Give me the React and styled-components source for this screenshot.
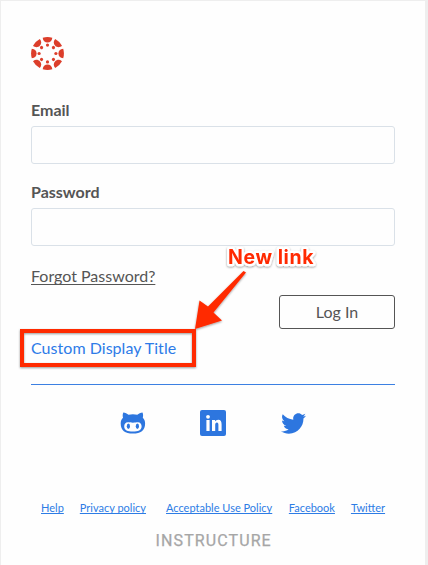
import React from "react";
import styled, { createGlobalStyle } from "styled-components";
import { FaTwitter } from "react-icons/fa";

const GlobalStyle = createGlobalStyle`
  *, *::before, *::after { box-sizing: border-box; }
  body { margin: 0; background: #eeeeee; font-family: Lato, sans-serif; }
`;

const Page = styled.div`
  position: relative;
  width: 428px;
  height: 565px;
  padding: 1px 3px 0 1px;
  background: #eeeeee;
  overflow: hidden;
`;

const Card = styled.main`
  display: flex;
  flex-direction: column;
  height: 564px;
  padding: 36px 30px 0;
  background: #fefefe;
`;

const Logo = styled.svg`
  display: block;
  width: 33px;
  height: 33px;
  margin-bottom: 30px;
  fill: #dc3e2b;
`;

const Field = styled.label`
  display: flex;
  flex-direction: column;
  gap: 6px;
  margin-bottom: 18px;
`;

const FieldLabel = styled.span`
  height: 20px;
  font-size: 16px;
  line-height: 20px;
  font-weight: 700;
  color: #555555;
`;

const Input = styled.input`
  width: 364px;
  height: 38px;
  padding: 0 12px;
  border: 1px solid #dae1e8;
  border-radius: 3px;
  background: #fefefe;
  outline: none;
`;

const Actions = styled.div`
  display: flex;
  justify-content: space-between;
  height: 65px;
`;

const ForgotLink = styled.a`
  margin-top: 2px;
  font-size: 16px;
  line-height: 20px;
  color: #555555;
  text-decoration: underline;
  text-underline-offset: 2px;
  text-decoration-thickness: 1px;
  text-decoration-skip-ink: none;
`;

const LoginButton = styled.button`
  align-self: flex-end;
  width: 116px;
  height: 34px;
  padding: 0;
  border: 1px solid #555555;
  border-radius: 3px;
  background: #fefefe;
  color: #555555;
  font: 16px/32px Lato, sans-serif;
`;

const CustomLink = styled.a`
  margin-top: 9px;
  font-size: 16px;
  line-height: 20px;
  letter-spacing: 0.04px;
  color: #2d7be8;
`;

const Divider = styled.hr`
  width: 364px;
  height: 1px;
  margin: 26px 0 0;
  border: 0;
  background: #3c80e2;
`;

const Social = styled.nav`
  display: flex;
  align-items: center;
  justify-content: center;
  height: 30px;
  margin-top: 23px;
  color: #2d76df;
`;

const SocialLink = styled.a`
  display: flex;
  justify-content: center;
  width: 80.5px;
`;

const FooterLinks = styled.nav`
  display: flex;
  margin: 62px 0 0 10px;
  white-space: nowrap;
`;

const FooterLink = styled.a`
  margin-right: ${({ $gap }) => $gap}px;
  font-size: 11px;
  line-height: 16px;
  color: #2d7ce5;
  text-decoration: underline;
  text-decoration-skip-ink: none;
  text-underline-offset: 1px;
  text-decoration-thickness: 1px;
`;

const Brand = styled.div`
  margin: 15px 0 0 124.6px;
  font: 400 16px/20px Roboto, sans-serif;
  letter-spacing: 1.1px;
  color: #a6a6a6;
  -webkit-text-stroke: 0.25px #a6a6a6;
`;

const Annotation = styled.svg`
  position: absolute;
  inset: 0;
  pointer-events: none;
`;

const Callout = styled.text`
  font: 700 19.5px Inter, sans-serif;
  fill: #ff2a05;
  stroke: #fff;
  stroke-width: 4.5px;
  stroke-linejoin: round;
  paint-order: stroke;
`;

const ANGLES = [0, 45, 90, 135, 180, 225, 270, 315];

const LINKS = [
  { label: "Help", gap: 16 },
  { label: "Privacy policy", gap: 20 },
  { label: "Acceptable Use Policy", gap: 16.6 },
  { label: "Facebook", gap: 16 },
  { label: "Twitter", gap: 0 },
];

function CanvasLogo() {
  return (
    <Logo viewBox="-16.5 -16.5 33 33" aria-label="Canvas">
      {ANGLES.map((angle) => (
        <g key={angle} transform={`rotate(${angle})`}>
          <path d="M-4.8-15.7A16.4 16.4 0 0 1 4.8-15.7C4.6-12.6 2.6-10.9 0-10.9S-4.6-12.6-4.8-15.7Z" />
          <circle cy="-8.4" r="1.6" />
        </g>
      ))}
    </Logo>
  );
}

function OctocatIcon() {
  return (
    <svg width="26" height="22" viewBox="0 0 26 22" fill="currentColor" aria-label="GitHub">
      <path
        fillRule="evenodd"
        d="M3.3.6C5.2.7 7.1 1.7 8.5 2.8Q12.9 1.9 17.3 2.8C18.7 1.7 20.6.7 22.5.6C23.2 2.3 23.3 4.1 22.8 5.7C24.4 7.2 25.1 9 25.1 11.4C25.1 18.3 20.7 21.6 12.9 21.6S.7 18.3.7 11.4C.7 9 1.4 7.2 3 5.7C2.5 4.1 2.6 2.3 3.3.6ZM7.8 10.3C5.6 10.3 4.2 12 4.2 14.3C4.2 18.4 7.6 19.5 12.9 19.5S21.6 18.4 21.6 14.3C21.6 12 20.2 10.3 18 10.3C16.1 10.3 14.8 10.7 12.9 10.7S9.7 10.3 7.8 10.3Z"
      />
      <ellipse cx="8.4" cy="14.3" rx="1.6" ry="2.7" />
      <ellipse cx="17.4" cy="14.3" rx="1.6" ry="2.7" />
    </svg>
  );
}

function LinkedInIcon() {
  return (
    <svg width="26" height="26" viewBox="0 0 26 26" aria-label="LinkedIn">
      <rect width="26" height="26" rx="2" fill="currentColor" />
      <g fill="#fefefe">
        <circle cx="8" cy="6.8" r="1.9" />
        <path d="M6.4 10H9.6V21H6.4ZM12 10H15V11.6C15.7 10.4 16.8 9.7 18.2 9.7C20.8 9.7 21.6 11.5 21.6 14.3V21H18.4V15C18.4 13.5 18.1 12.5 16.9 12.5C15.7 12.5 15.2 13.5 15.2 15V21H12Z" />
      </g>
    </svg>
  );
}

export default function App() {
  return (
    <>
      <GlobalStyle />
      <Page>
        <Card>
          <CanvasLogo />
          <Field>
            <FieldLabel>Email</FieldLabel>
            <Input type="email" />
          </Field>
          <Field>
            <FieldLabel>Password</FieldLabel>
            <Input type="password" />
          </Field>
          <Actions>
            <ForgotLink>Forgot Password?</ForgotLink>
            <LoginButton>Log In</LoginButton>
          </Actions>
          <CustomLink>Custom Display Title</CustomLink>
          <Divider />
          <Social>
            <SocialLink><OctocatIcon /></SocialLink>
            <SocialLink><LinkedInIcon /></SocialLink>
            <SocialLink><FaTwitter size={25} /></SocialLink>
          </Social>
          <FooterLinks>
            {LINKS.map(({ label, gap }) => (
              <FooterLink key={label} $gap={gap}>{label}</FooterLink>
            ))}
          </FooterLinks>
          <Brand>INSTRUCTURE</Brand>
        </Card>
        <Annotation width="428" height="565" viewBox="0 0 428 565">
          <defs>
            <filter id="shadow" x="-10%" y="-20%" width="120%" height="150%">
              <feDropShadow dx="0" dy="1" stdDeviation="1" floodColor="#000" floodOpacity="0.4" />
            </filter>
          </defs>
          <g filter="url(#shadow)">
            <rect x="22" y="331" width="172" height="34" fill="none" stroke="#ff2a05" strokeWidth="4" />
            <path d="M243.5 271L246 272.5L213.5 312.5L222 320.5L195 329L199.5 300.5L208 306.5Z" fill="#ff2a05" />
          </g>
          <g filter="url(#shadow)">
            <Callout x="228" y="264" textLength="85.5">New link</Callout>
          </g>
        </Annotation>
      </Page>
    </>
  );
}
